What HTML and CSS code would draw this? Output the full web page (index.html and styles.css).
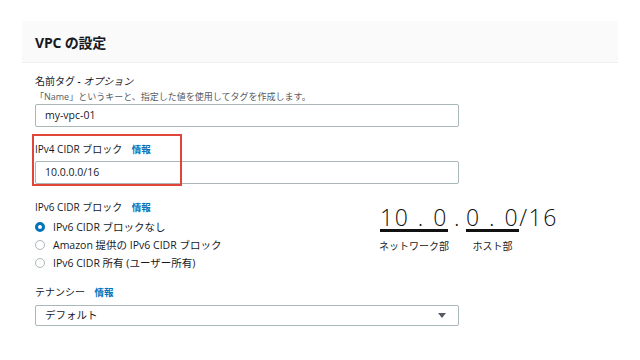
FILE: index.html
```html
<!DOCTYPE html>
<html lang="ja">
<head>
    <meta charset="UTF-8">
    <meta name="viewport" content="width=device-width, initial-scale=1.0">
    <title>VPC の設定</title>
    <link rel="stylesheet" href="styles.css">
</head>
<body>
    <div class="panel">
        <div class="panel-header">
            <h2>VPC の設定</h2>
        </div>

        <div class="panel-body">
            <div class="field field-name">
                <div class="label">名前タグ <i>- オプション</i></div>
                <div class="desc">「Name」というキーと、指定した値を使用してタグを作成します。</div>
                <div class="input">my-vpc-01</div>
            </div>

            <div class="field field-ipv4">
                <div class="label">IPv4 CIDR ブロック <a class="info">情報</a></div>
                <div class="input">10.0.0.0/16</div>
                <div class="highlight"></div>
            </div>

            <div class="field-row">
                <div class="field field-ipv6">
                    <div class="label">IPv6 CIDR ブロック <a class="info">情報</a></div>
                    <div class="radios">
                        <div class="radio checked"><span class="dot"></span>IPv6 CIDR ブロックなし</div>
                        <div class="radio"><span class="dot"></span>Amazon 提供の IPv6 CIDR ブロック</div>
                        <div class="radio"><span class="dot"></span>IPv6 CIDR 所有 (ユーザー所有)</div>
                    </div>
                </div>

                <div class="cidr">
                    <div class="part">
                        <span class="num under">10 . 0</span>
                        <span class="caption">ネットワーク部</span>
                    </div>
                    <span class="num sep">.</span>
                    <div class="part">
                        <span class="num under">0 . 0</span>
                        <span class="caption">ホスト部</span>
                    </div>
                    <span class="num">/16</span>
                </div>
            </div>

            <div class="field field-tenancy">
                <div class="label">テナンシー <a class="info">情報</a></div>
                <div class="input select">デフォルト<span class="caret"></span></div>
            </div>
        </div>
    </div>
</body>
</html>
```

FILE: styles.css
```css
body {
    margin: 0;
    background: #fff;
    font-family: "Open Sans", "Noto Sans CJK JP", sans-serif;
    color: #16191f;
}
.panel {
    width: 596px;
    margin: 21px 0 0 22px;
}
.panel-header {
    height: 41px;
    background: #fafafa;
    border-bottom: 1px solid #eeeeee;
    padding-left: 13px;
    display: flex;
    align-items: center;
}
.panel-header h2 {
    margin: 0;
    font-size: 14px;
    font-weight: 700;
    letter-spacing: -0.2px;
}
.panel-body {
    padding: 10px 13px 0;
}
.field {
    position: relative;
}
.label {
    font-size: 10px;
    line-height: 16px;
    color: #16191f;
}
.label i {
    font-style: italic;
}
.info {
    color: #0073bb;
    font-size: 9.5px;
    font-weight: 700;
    margin-left: 7px;
}
.desc {
    font-size: 9px;
    line-height: 12px;
    color: #545b64;
    margin-top: 2px;
}
.input {
    width: 413px;
    height: 21px;
    margin-top: 1px;
    padding-left: 9px;
    border: 1px solid #aab7b8;
    border-radius: 2px;
    font-size: 10.5px;
    line-height: 21px;
}
.field-ipv4 {
    margin-top: 14px;
}
.field-ipv4 .input {
    margin-top: 3px;
}
.highlight {
    position: absolute;
    left: -3px;
    top: -7px;
    width: 146px;
    height: 48px;
    border: 2px solid #e0453a;
}
.field-row {
    display: flex;
    margin-top: 15px;
}
.field-ipv6 {
    width: 344px;
}
.radios {
    margin-top: 2px;
}
.radio {
    display: flex;
    align-items: center;
    height: 18px;
    line-height: 18px;
    font-size: 10.5px;
}
.dot {
    box-sizing: border-box;
    width: 10px;
    height: 10px;
    border: 1px solid #aab7b8;
    border-radius: 50%;
    margin: 0 8px 0 0;
}
.radio.checked .dot {
    border: 3px solid #0073bb;
}
.cidr {
    display: flex;
    align-items: flex-start;
    margin-top: 7px;
    color: #111;
}
.part {
    display: flex;
    flex-direction: column;
    align-items: center;
}
.num {
    font-family: "Open Sans", sans-serif;
    font-size: 23px;
    font-weight: 300;
    line-height: 22px;
    letter-spacing: 1.5px;
    word-spacing: 1px;
}
.under {
    border-bottom: 3px solid #111;
    padding-bottom: 1px;
}
.sep {
    margin: 0 5px;
}
.caption {
    font-family: "Noto Sans CJK JP", sans-serif;
    font-size: 10px;
    line-height: 12px;
    margin-top: 8px;
    color: #222;
}
.field-tenancy {
    margin-top: 12px;
}
.select {
    display: flex;
    justify-content: space-between;
    align-items: center;
    height: 19px;
    line-height: 19px;
    margin-top: 4px;
    padding-right: 12px;
    width: 401px;
}
.caret {
    width: 0;
    height: 0;
    border-left: 4px solid transparent;
    border-right: 4px solid transparent;
    border-top: 5px solid #545b64;
}
```
